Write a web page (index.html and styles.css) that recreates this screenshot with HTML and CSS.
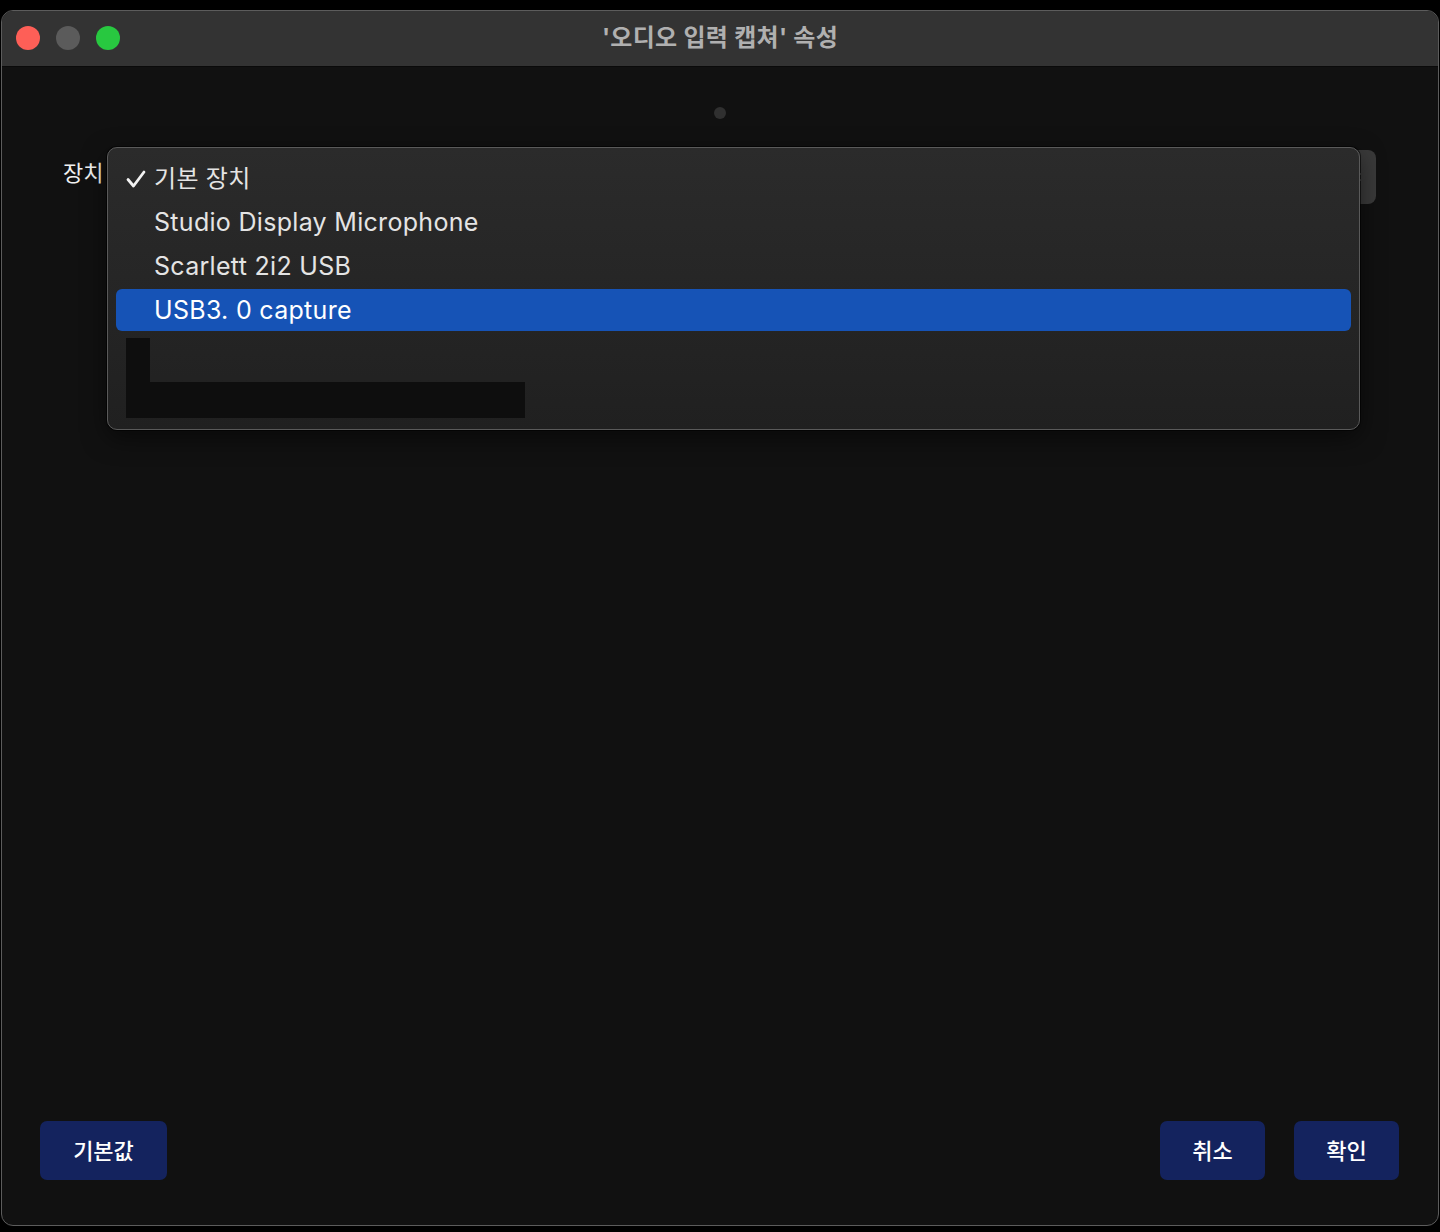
FILE: index.html
```html
<!DOCTYPE html>
<html lang="ko">
<head>
    <meta charset="UTF-8">
    <title>'오디오 입력 캡쳐' 속성</title>
    <link rel="stylesheet" href="styles.css">
</head>
<body>
    <div class="window">
        <div class="titlebar">
            <div class="lights">
                <span class="light close"></span>
                <span class="light minimize"></span>
                <span class="light zoom"></span>
            </div>
            <div class="title">'오디오 입력 캡쳐' 속성</div>
            <div></div>
        </div>

        <div class="content">
            <div class="page-dot"></div>

            <div class="form-row">
                <label class="field-label">장치</label>
                <div class="select">
                    <svg class="select-arrows" width="12" height="22" viewBox="0 0 12 22">
                        <path d="M2 8 L6 4 L10 8 M2 14 L6 18 L10 14" fill="none" stroke="#cfcfcf" stroke-width="1.6" stroke-linecap="round" stroke-linejoin="round"/>
                    </svg>
                </div>
            </div>

            <div class="spacer"></div>

            <div class="button-row">
                <button class="btn">기본값</button>
                <div class="btn-group">
                    <button class="btn btn-small">취소</button>
                    <button class="btn btn-small">확인</button>
                </div>
            </div>

            <!-- popup menu of the device select -->
            <div class="menu">
                <div class="menu-item">
                    <svg class="check" width="22" height="20" viewBox="0 0 22 20">
                        <path d="M3 10.5 L8.5 17 L19 3" fill="none" stroke="#f2f2f2" stroke-width="2.8" stroke-linecap="round" stroke-linejoin="round"/>
                    </svg>
                    <span class="ko">기본 장치</span>
                </div>
                <div class="menu-item">Studio Display Microphone</div>
                <div class="menu-item">Scarlett 2i2 USB</div>
                <div class="menu-item selected">USB3. 0 capture</div>
                <div class="redacted">
                    <div class="redacted-left"></div>
                    <div class="redacted-bar"></div>
                </div>
            </div>
        </div>
    </div>
</body>
</html>
```

FILE: styles.css
```css
body {
    margin: 0;
    padding: 0;
    background-color: #000;
    font-family: Inter, "Noto Sans CJK KR", sans-serif;
}

.window {
    margin: 10px 0 0 1px;
    width: 1438px;
    height: 1216px;
    box-sizing: border-box;
    border: 1px solid #5c5c5c;
    border-radius: 12px;
    overflow: hidden;
    display: flex;
    flex-direction: column;
    background-color: #111;
}

/* Title bar */
.titlebar {
    height: 55px;
    flex-shrink: 0;
    background-color: #333;
    border-bottom: 1px solid #0a0a0a;
    display: grid;
    grid-template-columns: 1fr auto 1fr;
    align-items: center;
}

.lights {
    display: flex;
    gap: 16px;
    padding-left: 14px;
    margin-top: -1px;
}

.light {
    width: 24px;
    height: 24px;
    border-radius: 50%;
}

.close { background-color: #fe5f57; }
.minimize { background-color: #5b5b5b; }
.zoom { background-color: #28c840; }

.title {
    font-size: 24px;
    font-weight: 700;
    color: #b0b0b0;
    letter-spacing: 0.3px;
    margin-top: -6px;
}

/* Content */
.content {
    position: relative;
    flex: 1;
    display: flex;
    flex-direction: column;
}

.page-dot {
    width: 12px;
    height: 12px;
    border-radius: 50%;
    background-color: #303030;
    margin: 40px auto 0;
}

.form-row {
    display: flex;
    align-items: center;
    margin-top: 31px;
    padding: 0 62px 0 61px;
}

.field-label {
    font-size: 22px;
    color: #f0f0f0;
    margin-right: 4px;
    margin-top: -12px;
}

.select {
    flex: 1;
    height: 54px;
    border-radius: 8px;
    background-color: #3a3a3a;
    display: flex;
    align-items: center;
    justify-content: flex-end;
    padding-right: 14px;
}

.spacer {
    flex: 1;
}

.button-row {
    display: flex;
    justify-content: space-between;
    padding: 0 39px 45px 38px;
}

.btn-group {
    display: flex;
    gap: 29px;
}

.btn {
    height: 59px;
    width: 127px;
    border: none;
    border-radius: 7px;
    background-color: #14235e;
    color: #fff;
    font-family: Inter, "Noto Sans CJK KR", sans-serif;
    font-size: 22px;
    font-weight: 500;
    padding-bottom: 5px;
}

.btn-small {
    width: 105px;
}

/* Popup menu */
.menu {
    position: absolute;
    top: 80px;
    left: 105px;
    width: 1253px;
    height: 283px;
    box-sizing: border-box;
    border: 1.5px solid #5a5a5a;
    border-radius: 10px;
    background: linear-gradient(#2b2b2b, #202020);
    box-shadow: 0 0 0 1px rgba(0, 0, 0, 0.6), 0 8px 24px rgba(0, 0, 0, 0.5);
    padding: 9px 8px 0;
    display: flex;
    flex-direction: column;
    gap: 2px;
}

.menu-item {
    position: relative;
    height: 42px;
    display: flex;
    align-items: center;
    padding-left: 38px;
    font-size: 25px;
    letter-spacing: 0.3px;
    color: #e4e4e4;
    border-radius: 6px;
}

.menu-item .ko {
    font-size: 24px;
    margin-top: -4px;
}

.menu-item.selected {
    background-color: #1653b6;
    color: #fff;
}

.check {
    position: absolute;
    left: 9px;
    top: 12px;
}

.redacted {
    display: flex;
    align-items: flex-end;
    margin: 5px 0 0 10px;
}

.redacted-left {
    width: 24px;
    height: 80px;
    background-color: #0e0e0e;
}

.redacted-bar {
    width: 375px;
    height: 36px;
    background-color: #0e0e0e;
}
```
